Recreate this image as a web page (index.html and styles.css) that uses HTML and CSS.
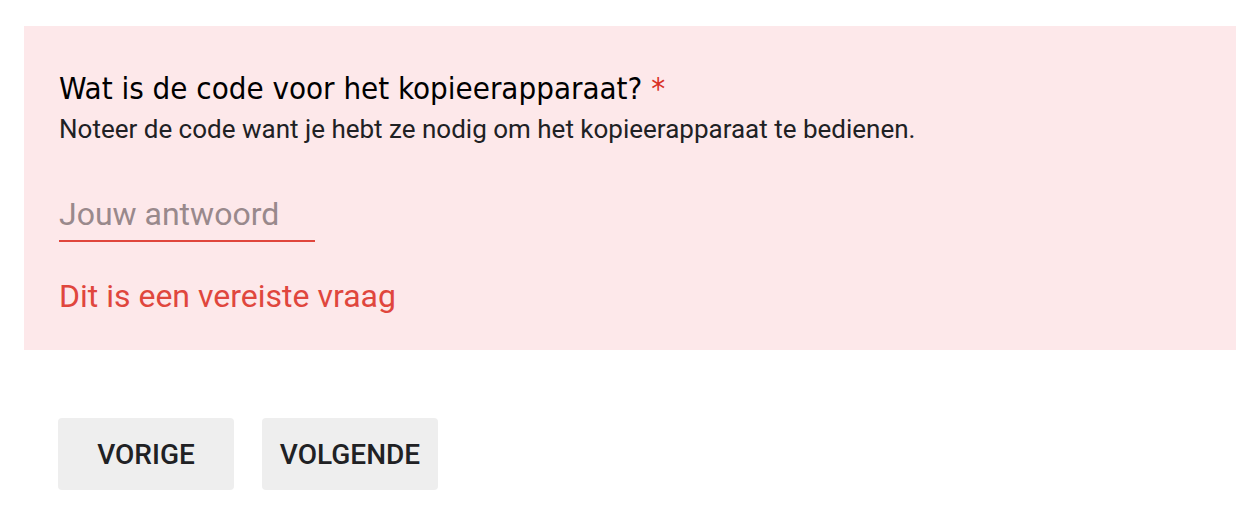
FILE: index.html
```html
<!DOCTYPE html>
<html lang="nl">
<head>
    <meta charset="UTF-8">
    <meta name="viewport" content="width=device-width, initial-scale=1.0">
    <title>Kopieerapparaat</title>
    <link rel="stylesheet" href="styles.css">
</head>
<body>
    <div class="page">
        <!-- Question card with error state -->
        <div class="question error">
            <div class="question-title">Wat is de code voor het kopieerapparaat? <span class="required">*</span></div>
            <div class="question-help">Noteer de code want je hebt ze nodig om het kopieerapparaat te bedienen.</div>

            <input type="text" class="answer" placeholder="Jouw antwoord">

            <div class="error-text">Dit is een vereiste vraag</div>
        </div>

        <!-- Navigation -->
        <div class="nav">
            <button class="nav-button">Vorige</button>
            <button class="nav-button">Volgende</button>
        </div>
    </div>
</body>
</html>
```

FILE: styles.css
```css
body {
    font-family: Roboto, Arial, sans-serif;
    background-color: #fff;
    color: #202124;
    margin: 0;
    padding: 0;
}

.page {
    padding: 26px 13px 0 24px;
}

.question {
    background-color: #fde8ea;
    padding: 42px 35px 36px 35px;
}

.question-title {
    font-family: "Comic Sans MS", "DejaVu Sans Condensed", sans-serif;
    font-size: 31px;
    line-height: 40px;
    color: #000;
}

.required {
    color: #d93025;
}

.question-help {
    margin-top: 5px;
    font-size: 26px;
    line-height: 32px;
    color: #202124;
}

.answer {
    display: block;
    width: 256px;
    margin-top: 51px;
    padding: 0 0 8px 0;
    border: none;
    border-bottom: 2px solid #e0463d;
    background: transparent;
    font-family: Roboto, Arial, sans-serif;
    font-size: 32px;
    line-height: 36px;
    color: #202124;
    outline: none;
}

.answer::placeholder {
    color: #99898c;
}

.error-text {
    margin-top: 36px;
    font-size: 32px;
    line-height: 36px;
    color: #e0463d;
}

.nav {
    display: flex;
    gap: 28px;
    padding: 68px 0 0 34px;
}

.nav-button {
    width: 176px;
    height: 72px;
    border: none;
    border-radius: 4px;
    background-color: #eeeeee;
    font-family: Roboto, Arial, sans-serif;
    font-size: 28px;
    font-weight: 500;
    text-transform: uppercase;
    color: #202124;
    cursor: pointer;
}
```
